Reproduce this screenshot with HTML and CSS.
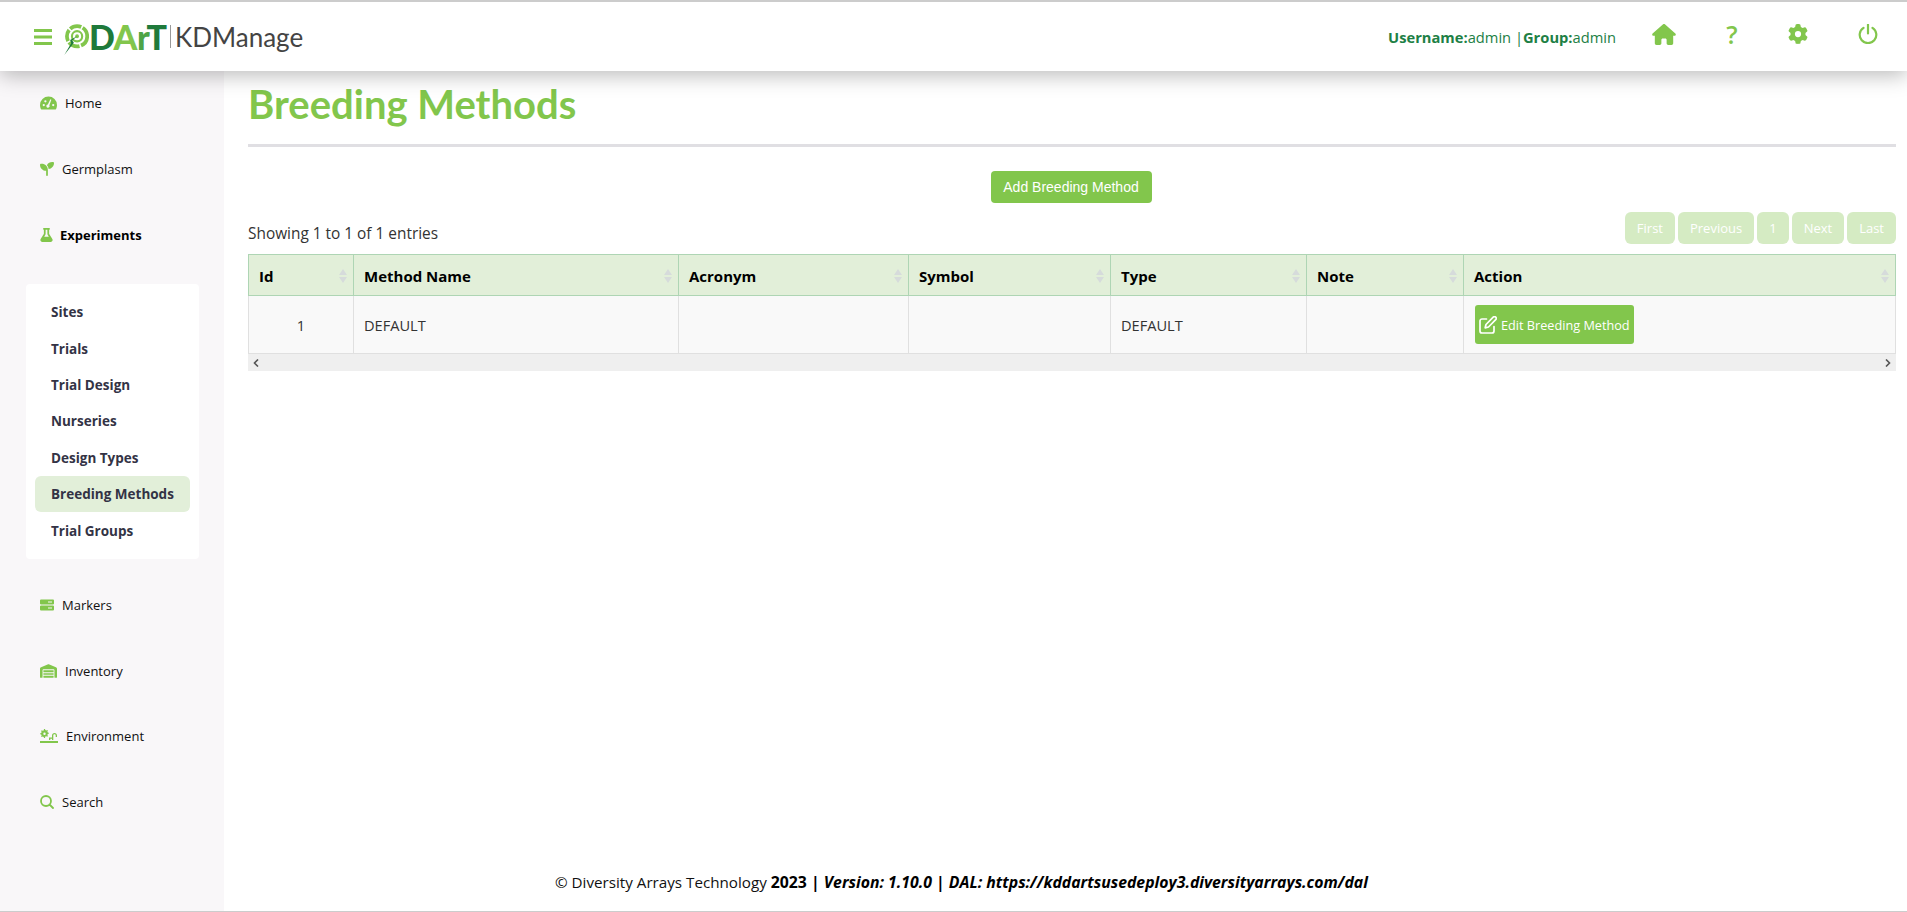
FILE: index.html
```html
<!DOCTYPE html>
<html lang="en">
<head>
    <meta charset="UTF-8">
    <title>KDManage - Breeding Methods</title>
    <link rel="stylesheet" href="styles.css">
</head>
<body>
    <header class="topbar">
        <div class="brand">
            <svg class="burger" viewBox="0 0 18 16"><path d="M0 0h18v3H0zM0 6.500h18v3H0zM0 13h18v3H0z"/></svg>
            <svg class="logo-mark" viewBox="0 0 24 30">
                <g fill="none" stroke="#82c64c">
                    <circle cx="13" cy="11.500" r="9.500" stroke-width="3.500" stroke-dasharray="11 1.500"/>
                    <circle cx="13" cy="11.500" r="4.800" stroke-width="2"/>
                </g>
                <circle cx="13" cy="11.500" r="1.800" fill="#82c64c"/>
                <path d="M13 11.500 6.500 15 7.500 18 1 29 10 17.500 8.500 15.500z" fill="#1f7a3b"/>
            </svg>
            <span class="logo-word"><span class="dark">D</span><span class="light">A</span><span class="mid">r</span><span class="dark">T</span></span>
            <span class="logo-sep"></span>
            <span class="logo-app">KDManage</span>
        </div>
        <div class="user-area">
            <div class="user-info"><b>Username:</b>admin |<b>Group:</b>admin</div>
            <svg class="top-icon home-icon" viewBox="0 0 576 512"><path d="M575.800 255.500c0 18-15 32.100-32 32.100h-32l.7 160.200c0 2.700-.2 5.400-.5 8.100V472c0 22.100-17.900 40-40 40H456c-1.100 0-2.200 0-3.300-.1c-1.400 .1-2.800 .1-4.200 .1H416 392c-22.100 0-40-17.900-40-40V448 384c0-17.700-14.300-32-32-32H256c-17.700 0-32 14.300-32 32v64 24c0 22.100-17.900 40-40 40H160 128.100c-1.500 0-3-.1-4.500-.2c-1.200 .1-2.400 .2-3.600 .2H104c-22.100 0-40-17.900-40-40V360c0-.9 0-1.900 .1-2.800V287.600H32c-18 0-32-14-32-32.100c0-9 3-17 10-24L266.400 8c7-7 15-8 22-8s15 2 21 7L564.800 231.500c8 7 12 15 11 24z"/></svg>
            <span class="help-icon">?</span>
            <svg class="top-icon gear-icon" viewBox="0 0 512 512"><path d="M495.900 166.600c3.200 8.700 .5 18.400-6.400 24.600l-43.300 39.400c1.100 8.300 1.700 16.800 1.700 25.400s-.6 17.100-1.700 25.400l43.300 39.400c6.900 6.200 9.600 15.900 6.400 24.600c-4.400 11.900-9.700 23.300-15.800 34.300l-4.700 8.100c-6.600 11-14 21.400-22.100 31.200c-5.900 7.200-15.700 9.600-24.500 6.800l-55.700-17.700c-13.400 10.300-28.200 18.900-44 25.400l-12.500 57.100c-2 9.100-9 16.300-18.200 17.800c-13.800 2.300-28 3.500-42.500 3.500s-28.700-1.200-42.500-3.500c-9.200-1.500-16.200-8.700-18.200-17.800l-12.500-57.100c-15.800-6.500-30.600-15.100-44-25.400L83.100 425.900c-8.800 2.800-18.600 .3-24.500-6.800c-8.100-9.800-15.500-20.200-22.100-31.200l-4.700-8.100c-6.100-11-11.400-22.400-15.800-34.300c-3.200-8.700-.5-18.400 6.400-24.600l43.300-39.400C64.600 273.100 64 264.600 64 256s.6-17.100 1.700-25.400L22.400 191.200c-6.900-6.200-9.600-15.900-6.400-24.600c4.400-11.900 9.700-23.300 15.800-34.300l4.700-8.100c6.600-11 14-21.400 22.100-31.200c5.900-7.200 15.700-9.600 24.500-6.800l55.700 17.700c13.400-10.300 28.200-18.900 44-25.400l12.500-57.100c2-9.100 9-16.300 18.200-17.800C227.300 1.200 241.500 0 256 0s28.700 1.200 42.500 3.500c9.200 1.500 16.200 8.700 18.200 17.800l12.500 57.100c15.800 6.500 30.600 15.100 44 25.400l55.700-17.700c8.800-2.800 18.600-.3 24.500 6.800c8.100 9.800 15.500 20.200 22.100 31.200l4.700 8.100c6.100 11 11.400 22.400 15.800 34.300zM256 336a80 80 0 1 0 0-160 80 80 0 1 0 0 160z"/></svg>
            <svg class="top-icon power-icon" viewBox="0 0 20 20"><path d="M5.500 3.800a8.300 8.300 0 1 0 9 0M10 0.500v9" fill="none" stroke="#82c64c" stroke-width="2.200" stroke-linecap="round"/></svg>
        </div>
    </header>

    <div class="layout">
        <nav class="sidebar">
            <a class="nav-item">
                <svg class="nav-icon w17" viewBox="0 0 18 14"><path fill-rule="evenodd" d="M9 0a9 9 0 0 1 9 9c0 2-.5 3.600-1.400 5H1.400C.5 12.600 0 11 0 9a9 9 0 0 1 9-9zM4 8a1.200 1.200 0 1 0 0 2.400A1.200 1.200 0 0 0 4 8zm1.700-4a1.200 1.200 0 1 0 0 2.400 1.200 1.200 0 0 0 0-2.400zM11 3l-2.700 5.600a1.700 1.700 0 1 0 1.600.8L12 3.500zm3 5a1.200 1.200 0 1 0 0 2.400A1.200 1.200 0 0 0 14 8z"/></svg>
                Home
            </a>
            <a class="nav-item">
                <svg class="nav-icon w14" viewBox="0 0 512 512"><path d="M512 32c0 113.600-84.600 207.500-194.200 222c-7.100-53.400-30.600-101.600-65.300-139.300C290.800 46 364 0 448 0h32c17.700 0 32 14.300 32 32zM0 96C0 78.300 14.300 64 32 64H64c123.700 0 224 100.300 224 224v32V480c0 17.700-14.300 32-32 32s-32-14.300-32-32V320C100.300 320 0 219.700 0 96z"/></svg>
                Germplasm
            </a>
            <a class="nav-item current">
                <svg class="nav-icon w13" viewBox="0 0 448 512"><path d="M288 0H160 128C110.300 0 96 14.300 96 32s14.300 32 32 32V196.800c0 11.800-3.300 23.500-9.500 33.500L10.300 406.200C3.600 417.200 0 429.700 0 442.600C0 480.900 31.100 512 69.400 512H378.600c38.300 0 69.400-31.100 69.400-69.400c0-12.800-3.600-25.400-10.300-36.400L329.500 230.400c-6.200-10.100-9.500-21.700-9.500-33.500V64c17.700 0 32-14.300 32-32s-14.300-32-32-32H288zM192 196.800V64h64V196.800c0 23.700 6.600 46.900 19 67.100L309.500 320h-171L173 263.900c12.400-20.200 19-43.400 19-67.100z"/></svg>
                Experiments
            </a>

            <div class="subnav">
                <a class="sub-item">Sites</a>
                <a class="sub-item">Trials</a>
                <a class="sub-item">Trial Design</a>
                <a class="sub-item">Nurseries</a>
                <a class="sub-item">Design Types</a>
                <a class="sub-item active">Breeding Methods</a>
                <a class="sub-item">Trial Groups</a>
            </div>

            <a class="nav-item">
                <svg class="nav-icon w14" viewBox="0 0 14 11"><path fill-rule="evenodd" d="M1 0h12a1 1 0 0 1 1 1v3a1 1 0 0 1-1 1H1a1 1 0 0 1-1-1V1a1 1 0 0 1 1-1zm7 2v1h4V2zM1 6h12a1 1 0 0 1 1 1v3a1 1 0 0 1-1 1H1a1 1 0 0 1-1-1V7a1 1 0 0 1 1-1zm7 2v1h4V8z"/></svg>
                Markers
            </a>
            <a class="nav-item">
                <svg class="nav-icon w17" viewBox="0 0 640 512"><path d="M0 488V171.300c0-26.200 15.900-49.700 40.200-59.400L308.100 4.800c7.600-3.100 16.100-3.100 23.700 0L599.800 111.900c24.300 9.700 40.200 33.300 40.200 59.400V488c0 13.300-10.700 24-24 24H568c-13.300 0-24-10.700-24-24V224c0-17.700-14.300-32-32-32H128c-17.700 0-32 14.300-32 32V488c0 13.300-10.700 24-24 24H24c-13.300 0-24-10.700-24-24zm488 24H152c-13.300 0-24-10.700-24-24V432H512v56c0 13.300-10.700 24-24 24zM128 400V336H512v64H128zm0-96V224H512v80H128z"/></svg>
                Inventory
            </a>
            <a class="nav-item">
                <svg class="nav-icon w18" viewBox="0 0 18 14"><path d="M4 0h1l.3 1 1 .4.900-.5.700.7-.5.900.4 1 1 .3v1l-1 .3-.4 1 .5.900-.7.700-.9-.5-1 .4L5 9H4l-.3-1-1-.4-.9.5-.7-.7.5-.9-.4-1-1-.3v-1l1-.3.4-1-.5-.9.7-.7.900.5 1-.4zM4.500 3.500a1.200 1.200 0 1 0 0 2.400 1.200 1.200 0 0 0 0-2.400zM0 12h18v2H0zM12 11V6.500c0-1.500 1-2.500 2.500-2.500S17 5 17 6.500V8h-1.300V6.500c0-.8-.5-1.300-1.200-1.300s-1.200.5-1.200 1.300V11zM9 11V8.500h3v1.200h-1.700V11z"/></svg>
                Environment
            </a>
            <a class="nav-item">
                <svg class="nav-icon w14" viewBox="0 0 14 14"><path d="M6 1a5 5 0 1 1 0 10A5 5 0 0 1 6 1zM9.500 9.500 13 13" fill="none" stroke="#82c64c" stroke-width="1.800" stroke-linecap="round"/></svg>
                Search
            </a>
        </nav>

        <main class="content">
            <h1 class="page-title">Breeding Methods</h1>
            <div class="add-row">
                <button class="add-btn">Add Breeding Method</button>
            </div>
            <div class="table-top">
                <div class="table-info">Showing 1 to 1 of 1 entries</div>
                <div class="paging">
                    <span class="page-btn">First</span>
                    <span class="page-btn">Previous</span>
                    <span class="page-btn">1</span>
                    <span class="page-btn">Next</span>
                    <span class="page-btn">Last</span>
                </div>
            </div>
            <table class="data-table">
                <thead>
                    <tr>
                        <th class="col-id">Id</th>
                        <th class="col-name">Method Name</th>
                        <th class="col-acronym">Acronym</th>
                        <th class="col-symbol">Symbol</th>
                        <th class="col-type">Type</th>
                        <th class="col-note">Note</th>
                        <th>Action</th>
                    </tr>
                </thead>
                <tbody>
                    <tr>
                        <td class="cell-id">1</td>
                        <td>DEFAULT</td>
                        <td></td>
                        <td></td>
                        <td>DEFAULT</td>
                        <td></td>
                        <td>
                            <button class="edit-btn">
                                <svg class="edit-icon" viewBox="0 0 18 18"><path d="M7.500 3H3a2 2 0 0 0-2 2v10a2 2 0 0 0 2 2h10a2 2 0 0 0 2-2v-4.500" fill="none" stroke="#fff" stroke-width="1.700" stroke-linecap="round"/><path d="M14.200 1.200a1.700 1.700 0 0 1 2.500 2.500L9.500 11l-3.300.8.800-3.300z" fill="none" stroke="#fff" stroke-width="1.700" stroke-linejoin="round"/></svg>
                                Edit Breeding Method
                            </button>
                        </td>
                    </tr>
                </tbody>
            </table>
            <div class="scroll-track">
                <svg class="chevron" viewBox="0 0 6 8"><path d="M5 .5 1.500 4 5 7.500" fill="none" stroke="#555" stroke-width="1.600"/></svg>
                <svg class="chevron" viewBox="0 0 6 8"><path d="M1 .5 4.500 4 1 7.500" fill="none" stroke="#555" stroke-width="1.600"/></svg>
            </div>
            <footer class="footer">
                &copy; Diversity Arrays Technology <b>2023 | <i>Version: 1.10.0 | DAL: https://kddartsusedeploy3.diversityarrays.com/dal</i></b>
            </footer>
        </main>
    </div>
</body>
</html>
```

FILE: styles.css
```css
* {
    box-sizing: border-box;
}
body {
    margin: 0;
    height: 912px;
    overflow: hidden;
    display: flex;
    flex-direction: column;
    background-color: white;
    font-family: "Open Sans", "Noto Sans", sans-serif;
    font-size: 13px;
    color: #222;
    border-bottom: 1px solid #ccc;
}
svg {
    display: block;
    flex: none;
}
.topbar {
    height: 71px;
    flex: none;
    display: flex;
    justify-content: space-between;
    align-items: center;
    padding: 0 29px 0 34px;
    background-color: white;
    border-top: 2px solid #ccc;
    box-shadow: 0 4px 20px rgba(0,0,0,0.28);
    position: relative;
    z-index: 2;
}
.brand {
    display: flex;
    align-items: center;
}
.burger {
    width: 18px;
    height: 16px;
    fill: #82c64c;
    margin-right: 11px;
}
.logo-mark {
    width: 26px;
    height: 32px;
    margin-top: 6px;
}
.logo-word {
    font-family: Lato, sans-serif;
    font-weight: 900;
    font-size: 34px;
    line-height: 1;
    letter-spacing: -0.5px;
    width: 78px;
}
.dark { color: #1f7a3b; }
.light { color: #82c64c; }
.mid { color: #4ea447; }
.logo-sep {
    width: 1px;
    height: 23px;
    background-color: #999;
    margin: 0 4px 0 3px;
}
.logo-app {
    font-family: Lato, sans-serif;
    font-size: 26px;
    color: #444;
    line-height: 1;
}
.user-area {
    display: flex;
    align-items: center;
}
.user-info {
    color: #1d8045;
    font-size: 14.700px;
    margin-right: 36px;
    white-space: nowrap;
}
.top-icon {
    fill: #82c64c;
}
.home-icon {
    width: 24px;
    height: 21px;
    margin-top: -5px;
}
.help-icon {
    width: 12px;
    margin-left: 50px;
    margin-top: -4px;
    color: #82c64c;
    font-weight: 600;
    font-size: 25px;
    line-height: 1;
    text-align: center;
}
.gear-icon {
    width: 20px;
    height: 20px;
    margin-left: 50px;
    margin-top: -5px;
}
.power-icon {
    width: 20px;
    height: 20px;
    margin-left: 50px;
    margin-top: -5px;
}

.layout {
    flex: 1;
    display: flex;
    min-height: 0;
}
.sidebar {
    width: 224px;
    flex: none;
    margin-top: -0.4px;
    background-color: #f9f7f9;
}
.nav-item {
    height: 65.700px;
    display: flex;
    align-items: center;
    gap: 8px;
    padding-left: 40px;
    color: #111;
}
.nav-item.current {
    font-weight: 700;
    color: black;
    gap: 7px;
}
.nav-icon {
    fill: #82c64c;
}
.w13 { width: 13px; height: 14px; }
.w14 { width: 14px; height: 14px; }
.w17 { width: 17px; height: 14px; }
.w18 { width: 18px; height: 14px; }
.subnav {
    width: 173px;
    margin: 16.300px 0 13.300px 26px;
    padding: 10px 9px;
    background-color: white;
    border-radius: 4px;
}
.sub-item {
    display: flex;
    align-items: center;
    height: 36.400px;
    padding-left: 16px;
    border-radius: 6px;
    font-size: 13.500px;
    font-weight: 700;
    color: #333345;
}
.sub-item.active {
    background-color: #e2efd9;
}

.content {
    flex: 1;
    min-width: 0;
    display: flex;
    flex-direction: column;
    padding: 0 11px 0 24px;
}
.page-title {
    margin: 0;
    height: 76px;
    padding-top: 5px;
    border-bottom: 3px solid #e0dfe3;
    font-family: Lato, sans-serif;
    font-weight: 700;
    font-size: 40px;
    line-height: 56px;
    color: #82c64c;
}
.add-row {
    display: flex;
    justify-content: center;
    margin-top: 24px;
    padding-right: 2px;
}
.add-btn {
    width: 161px;
    height: 32px;
    background-color: #82c64c;
    border: none;
    border-radius: 4px;
    color: white;
    font-family: "Liberation Sans", Arial, sans-serif;
    font-size: 14px;
}
.table-top {
    display: flex;
    justify-content: space-between;
    align-items: flex-end;
    margin-top: 9px;
    margin-bottom: 10px;
}
.table-info {
    font-size: 15.400px;
    color: #333;
    line-height: 20px;
}
.paging {
    display: flex;
    gap: 3px;
}
.page-btn {
    height: 32px;
    padding: 0 12px;
    display: flex;
    align-items: center;
    background-color: #d5ebc3;
    border-radius: 6px;
    color: white;
    font-size: 13px;
}
.data-table {
    width: 100%;
    border-collapse: collapse;
    table-layout: fixed;
}
.data-table th {
    height: 41px;
    padding: 1px 10px 0;
    text-align: left;
    font-size: 15px;
    font-weight: 700;
    color: black;
    background-color: #e2efd9;
    border: 1px solid #aed5b4;
    position: relative;
}
.data-table th::before,
.data-table th::after {
    content: "";
    position: absolute;
    right: 6px;
    border-left: 4px solid transparent;
    border-right: 4px solid transparent;
}
.data-table th::before {
    top: 14px;
    border-bottom: 6px solid #d6dbdb;
}
.data-table th::after {
    top: 22px;
    border-top: 6px solid #d6dbdb;
}
.col-id { width: 105px; }
.col-name { width: 325px; }
.col-acronym { width: 230px; }
.col-symbol { width: 202px; }
.col-type { width: 196px; }
.col-note { width: 157px; }
.data-table td {
    height: 58px;
    padding: 0 10px;
    font-size: 14.600px;
    color: #333;
    background-color: #f9f9f9;
    border: 1px solid #e0e0e0;
}
.data-table td.cell-id {
    text-align: center;
}
.edit-btn {
    display: flex;
    align-items: center;
    gap: 4px;
    width: 159px;
    height: 39px;
    padding: 0 4px;
    margin-left: 1px;
    background-color: #82c64c;
    border: none;
    border-radius: 3px;
    color: white;
    font-family: "Open Sans", sans-serif;
    font-size: 12.700px;
    white-space: nowrap;
}
.edit-icon {
    width: 18px;
    height: 18px;
}
.scroll-track {
    height: 17px;
    display: flex;
    justify-content: space-between;
    align-items: center;
    padding: 0 5px;
    background-color: #efefef;
}
.chevron {
    width: 6px;
    height: 8px;
}
.footer {
    margin-top: auto;
    margin-bottom: 19px;
    padding-left: 307px;
    font-size: 15.200px;
    line-height: 20px;
    color: #111;
    white-space: nowrap;
}
.footer b {
    font-size: 15.800px;
    color: black;
}
```
